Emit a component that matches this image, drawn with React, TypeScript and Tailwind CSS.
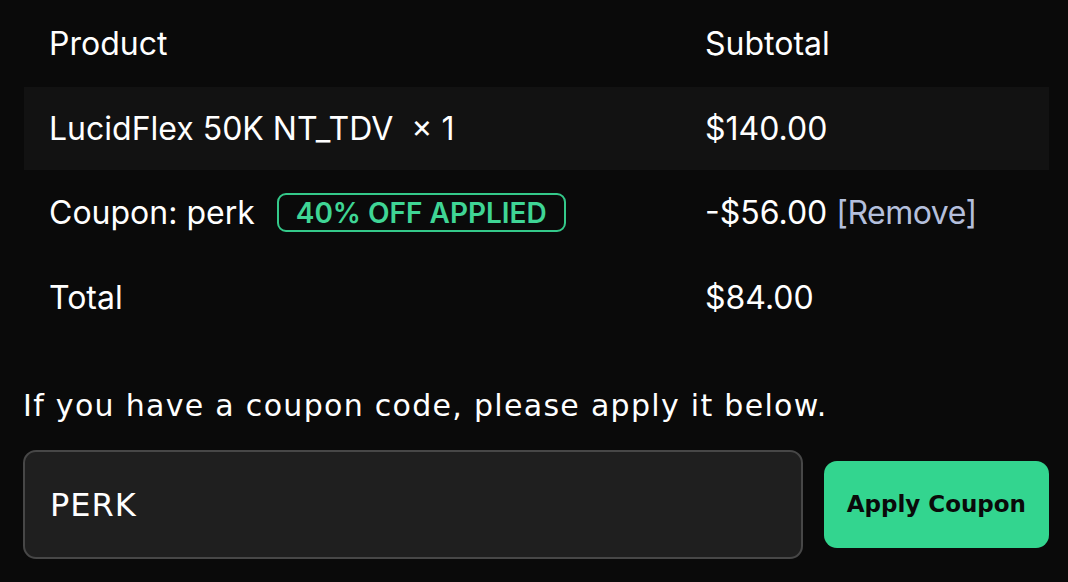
import React from 'react';

const rows = [
  { label: 'Product', value: 'Subtotal', header: true },
];

export default function App() {
  return (
    <div className="min-h-[582px] w-full bg-[#0a0a0a] text-white overflow-hidden pl-[24px] pr-[19px]">
      {/* Order table */}
      <div className="font-['Inter',sans-serif] text-[32px]">
        {rows.map((r) => (
          <div key={r.label} className="grid grid-cols-[656px_1fr] h-[87px] items-center">
            <div className="pl-[25px]">{r.label}</div>
            <div className="pl-[25px]">{r.value}</div>
          </div>
        ))}

        <div className="grid grid-cols-[656px_1fr] h-[83px] items-center bg-[#121212]">
          <div className="pl-[25px]">LucidFlex 50K NT_TDV&nbsp; × 1</div>
          <div className="pl-[25px]">$140.00</div>
        </div>

        <div className="grid grid-cols-[656px_1fr] h-[85px] items-center">
          <div className="pl-[25px] flex items-center gap-[22px]">
            <span>Coupon: perk</span>
            <span className="h-[39px] px-[17px] flex items-center rounded-[9px] border-2 border-[#34c98a] text-[#3fd595] text-[28px] font-semibold">
              40% OFF APPLIED
            </span>
          </div>
          <div className="pl-[25px]">
            -$56.00 <span className="text-[#b4bfdc] tracking-[-0.5px]">[Remove]</span>
          </div>
        </div>

        <div className="grid grid-cols-[656px_1fr] h-[85px] items-center">
          <div className="pl-[25px]">Total</div>
          <div className="pl-[25px]">$84.00</div>
        </div>
      </div>

      {/* Coupon form */}
      <p className="mt-[44px] -ml-px font-['DejaVu_Sans',sans-serif] text-[30px] tracking-[1.3px] leading-[44px]">
        If you have a coupon code, please apply it below.
      </p>

      <div className="mt-[22px] -ml-px flex items-center gap-[21px]">
        <div className="w-[782px] h-[109px] rounded-[13px] border-2 border-[#474747] bg-[#1f1f1f] flex items-center pl-[25px] font-['DejaVu_Sans',sans-serif] text-[32px] tracking-[1px]">
          PERK
        </div>
        <button className="w-[226px] h-[87px] rounded-[13px] bg-[#33d58f] text-[#0a0a0a] font-['DejaVu_Sans',sans-serif] font-bold text-[23px]">
          Apply Coupon
        </button>
      </div>
    </div>
  );
}
